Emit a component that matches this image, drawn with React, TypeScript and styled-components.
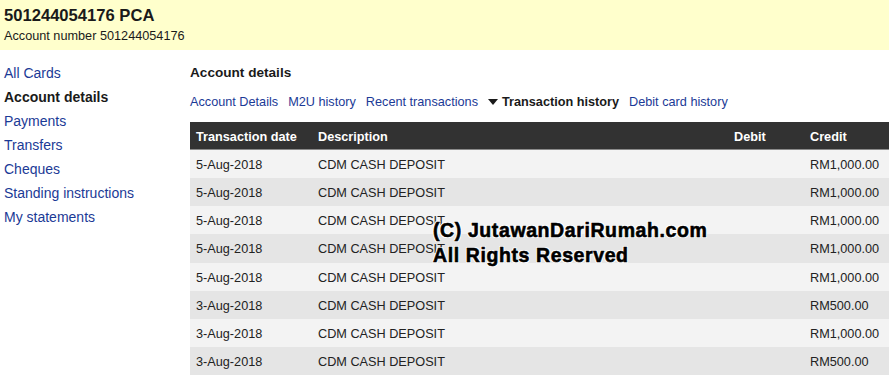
import React from "react";
import styled, { createGlobalStyle } from "styled-components";

const Global = createGlobalStyle`
  html, body { margin: 0; padding: 0; background: #fff; }
  body { font-family: "Liberation Sans", Arial, sans-serif; color: #222; }
`;

const Page = styled.div`
  position: relative;
  width: 889px;
  height: 375px;
  overflow: hidden;
`;

const Banner = styled.header`
  background: #ffffcc;
  height: 50px;
  box-sizing: border-box;
  padding: 6px 4px 0;
`;

const Title = styled.h1`
  margin: 0;
  font-size: 16.6px;
  line-height: 20px;
  font-weight: bold;
  color: #1a1a1a;
`;

const SubTitle = styled.div`
  font-size: 12.7px;
  line-height: 20px;
  color: #1a1a1a;
`;

const Body = styled.div`
  display: flex;
  padding-top: 11px;
`;

const Sidebar = styled.nav`
  width: 190px;
  flex: none;
  display: flex;
  flex-direction: column;
  padding-left: 4px;
  box-sizing: border-box;
`;

const SideLink = styled.a<{ $active?: boolean }>`
  font-size: 14px;
  line-height: 24px;
  color: ${(p) => (p.$active ? "#1a1a1a" : "#1b3a96")};
  font-weight: ${(p) => (p.$active ? "bold" : "normal")};
  text-decoration: none;
`;

const Main = styled.main`
  flex: 1;
  display: flex;
  flex-direction: column;
`;

const SectionTitle = styled.h2`
  margin: 0;
  font-size: 13.6px;
  line-height: 24px;
  font-weight: bold;
  color: #1a1a1a;
`;

const Tabs = styled.div`
  display: flex;
  align-items: center;
  gap: 10px;
  margin-top: 5px;
  height: 24px;
`;

const Tab = styled.a<{ $active?: boolean }>`
  font-size: 12.7px;
  color: ${(p) => (p.$active ? "#1a1a1a" : "#1b3a96")};
  font-weight: ${(p) => (p.$active ? "bold" : "normal")};
  text-decoration: none;
  display: flex;
  align-items: center;
  gap: 4px;
`;

const Caret = styled.span`
  width: 0;
  height: 0;
  border-left: 5px solid transparent;
  border-right: 5px solid transparent;
  border-top: 6px solid #1a1a1a;
`;

const Table = styled.div`
  margin-top: 8px;
  display: grid;
  grid-template-columns: 122px 416px 76px 1fr;
`;

const Row = styled.div<{ $alt?: boolean }>`
  display: contents;
  & > div {
    background: ${(p) => (p.$alt ? "#e5e5e5" : "#f3f3f3")};
  }
`;

const HeadCell = styled.div`
  background: #323232;
  color: #fff;
  font-weight: bold;
  font-size: 12.7px;
  height: 28px;
  line-height: 30px;
  padding-left: 6px;
  border-bottom: 1px solid #8a8a8a;
  box-sizing: border-box;
`;

const Cell = styled.div`
  font-size: 12.7px;
  color: #222;
  height: 28.15px;
  line-height: 30px;
  padding-left: 6px;
  white-space: nowrap;
`;

const Watermark = styled.div`
  position: absolute;
  left: 433px;
  top: 218px;
  font-family: "Liberation Sans", Arial, sans-serif;
  font-weight: 900;
  font-size: 19.5px;
  line-height: 25px;
  letter-spacing: 0.6px;
  color: #000;
  -webkit-text-stroke: 0.6px #000;
  text-shadow: 1px 1px 0 #fff, -1px -1px 0 #fff, 1px -1px 0 #fff, -1px 1px 0 #fff;
  pointer-events: none;
`;

const rows = [
  ["5-Aug-2018", "RM1,000.00"],
  ["5-Aug-2018", "RM1,000.00"],
  ["5-Aug-2018", "RM1,000.00"],
  ["5-Aug-2018", "RM1,000.00"],
  ["5-Aug-2018", "RM1,000.00"],
  ["3-Aug-2018", "RM500.00"],
  ["3-Aug-2018", "RM1,000.00"],
  ["3-Aug-2018", "RM500.00"],
];

export default function App() {
  return (
    <Page>
      <Global />
      <Banner>
        <Title>501244054176 PCA</Title>
        <SubTitle>Account number 501244054176</SubTitle>
      </Banner>
      <Body>
        <Sidebar>
          <SideLink>All Cards</SideLink>
          <SideLink $active>Account details</SideLink>
          <SideLink>Payments</SideLink>
          <SideLink>Transfers</SideLink>
          <SideLink>Cheques</SideLink>
          <SideLink>Standing instructions</SideLink>
          <SideLink>My statements</SideLink>
        </Sidebar>
        <Main>
          <SectionTitle>Account details</SectionTitle>
          <Tabs>
            <Tab>Account Details</Tab>
            <Tab>M2U history</Tab>
            <Tab>Recent transactions</Tab>
            <Tab $active>
              <Caret />
              Transaction history
            </Tab>
            <Tab>Debit card history</Tab>
          </Tabs>
          <Table>
            <HeadCell>Transaction date</HeadCell>
            <HeadCell>Description</HeadCell>
            <HeadCell>Debit</HeadCell>
            <HeadCell>Credit</HeadCell>
            {rows.map((r, i) => (
              <Row key={i} $alt={i % 2 === 1}>
                <Cell>{r[0]}</Cell>
                <Cell>CDM CASH DEPOSIT</Cell>
                <Cell></Cell>
                <Cell>{r[1]}</Cell>
              </Row>
            ))}
          </Table>
        </Main>
      </Body>
      <Watermark>
        (C) JutawanDariRumah.com
        <br />
        All Rights Reserved
      </Watermark>
    </Page>
  );
}
